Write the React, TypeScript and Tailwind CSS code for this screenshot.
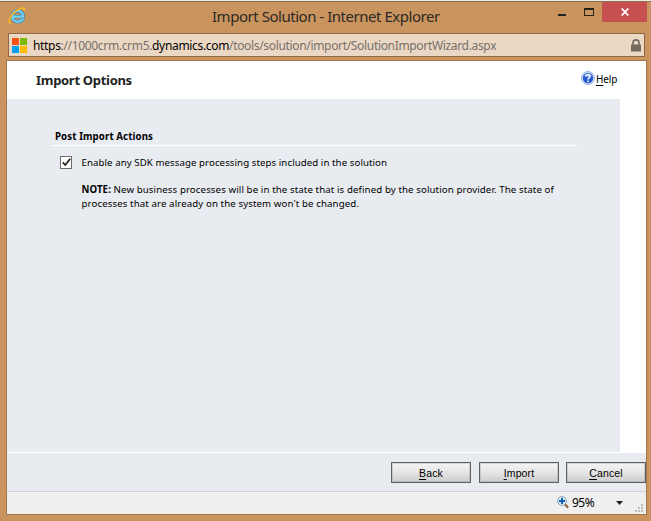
import React from "react";

function IELogo() {
  return (
    <svg className="h-[18px] w-[18px] shrink-0" viewBox="0 0 18 18" fill="none">
      <path d="M15.2 11.8C14.2 13.7 12.2 14.8 9.9 14.8C6.6 14.8 4.3 12.6 4.3 9.3C4.3 6 6.6 3.9 9.8 3.9C13.2 3.9 15.3 6.1 15.1 9.6H5.3" stroke="#2d86b5" strokeWidth="3.5" />
      <path d="M15.2 11.8C14.2 13.7 12.2 14.8 9.9 14.8C6.6 14.8 4.3 12.6 4.3 9.3C4.3 6 6.6 3.9 9.8 3.9C13.2 3.9 15.3 6.1 15.1 9.6H5.3" stroke="#78d0f2" strokeWidth="2.2" />
      <path d="M2.8 16.2C-.4 16.3 1.2 11 5.2 6.6C9.3 2 15.4 0 16.3 1.9C16.6 2.6 16.4 3.5 16.1 4.3" stroke="#f4b52b" strokeWidth="1.6" />
    </svg>
  );
}

function HelpIcon() {
  return (
    <svg className="h-[14px] w-[14px] shrink-0" viewBox="0 0 14 14">
      <circle cx="7" cy="7" r="6.4" fill="#e4edfb" stroke="#7a9ee0" strokeWidth=".9" />
      <circle cx="7" cy="7" r="5.2" fill="#245bd0" />
      <path d="M3 5Q4 2.2 7 2.2Q10 2.2 11 5Q7 7 3 5Z" fill="#6b9ceb" />
      <path d="M5 5.5C5 3.2 9 3.3 9 5.5C9 7 7 6.8 7 8.6" fill="none" stroke="white" strokeWidth="1.5" />
      <rect x="6.2" y="9.6" width="1.6" height="1.5" fill="white" />
    </svg>
  );
}

function WizardButton({ label }: { label: string }) {
  return (
    <button className="flex h-[21px] w-[80px] shrink-0 items-center justify-center border border-[#5f6063] bg-linear-to-b from-[#f5f5f5] via-[#e5e5e5] to-[#cdcdcd] font-['Liberation_Sans',Arial,sans-serif] text-[10.5px] leading-[14px] tracking-[0.15px] text-black shadow-[inset_0_0_0_1px_#77777740]">
      <span><span className="underline underline-offset-2">{label[0]}</span>{label.slice(1)}</span>
    </button>
  );
}

export default function App() {
  return (
    <div className="flex h-[521px] w-[651px] flex-col overflow-hidden border-t border-[#ecece9] bg-[#c9945e] font-['Noto_Sans',sans-serif] text-black">
      <header className="flex h-[32px] items-start border-t border-[#8e6c49]">
        <div className="w-[212px] pt-[5px] pl-[8px]"><IELogo /></div>
        <h1 className="w-[346px] pt-[4px] text-[15px] leading-[20px] tracking-[-0.47px] whitespace-nowrap text-[#2d2925]">Import Solution - Internet Explorer</h1>
        <div className="mt-[12px] h-[2px] w-[8px] bg-[#222]" />
        <div className="mt-[6px] ml-[18px] h-[8px] w-[10px] border border-t-2 border-[#27221c]" />
        <div className="ml-[8px] flex h-[20px] w-[45px] items-center justify-center bg-[#c75050]">
          <svg className="h-[8px] w-[8px]" viewBox="0 0 8 8"><path d="M.7.5L7.3 7.5M7.3.5L.7 7.5" stroke="white" strokeWidth="1.8" /></svg>
        </div>
      </header>
      <div className="ml-[8px] flex h-[24px] w-[637px] items-center border border-[#8e6744] bg-[#ebd8c4] pr-[3px] pl-[3px]">
        <div className="grid h-[15px] w-[15px] shrink-0 grid-cols-2 gap-px">
          <div className="bg-[#f65314]" /><div className="bg-[#7cbb00]" /><div className="bg-[#00a1f1]" /><div className="bg-[#ffbb00]" />
        </div>
        <div className="ml-[6px] flex-1 pt-px text-[12px] leading-[18px] tracking-[-0.33px] whitespace-nowrap text-[#77706a]">
          <span className="text-black">https</span>://1000crm.crm5.<span className="text-black">dynamics.com</span>/tools/solution/import/SolutionImportWizard.aspx
        </div>
        <svg className="h-[13px] w-[10px]" viewBox="0 0 10 13"><path d="M2 6V3.6C2-.1 8-.1 8 3.6V6" fill="none" stroke="#756b60" strokeWidth="1.6" /><rect y="5.5" width="10" height="7" rx=".6" fill="#756b60" /></svg>
      </div>
      <main className="mt-[3px] ml-[6px] flex h-[455px] w-[641px] flex-col border border-[#a0764c] bg-white">
        <div className="flex h-[38px] items-start">
          <h2 className="w-[574px] pt-[9px] pl-[29px] text-[13px] leading-[20px] font-bold tracking-[-0.3px] text-[#222]">Import Options</h2>
          <div className="flex pt-[10px]">
            <HelpIcon />
            <span className="ml-px text-[10px] leading-[17px] tracking-[-0.1px]"><span className="underline underline-offset-2">H</span>elp</span>
          </div>
        </div>
        <section className="h-[353px] w-[613px] bg-[#e8ebf0] pt-[30px] pl-[45px]">
          <h3 className="h-[17px] w-[525px] border-b border-white pl-[3px] text-[9.7px] leading-[15px] font-bold tracking-[0.1px]">Post Import Actions</h3>
          <div className="mt-[9px] flex items-center pl-[8px]">
            <div className="flex h-[13px] w-[12px] items-center justify-center border border-[#6c6c6c] bg-white">
              <svg className="h-[9px] w-[9px]" viewBox="0 0 9 9"><path d="M.8 4.4L3.3 7L8.2 .8" fill="none" stroke="#222" strokeWidth="1.8" /></svg>
            </div>
            <label className="ml-[9.5px] pt-px text-[9.7px] leading-[14px] tracking-[0.06px] whitespace-nowrap">Enable any SDK message processing steps included in the solution</label>
          </div>
          <p className="mt-[13px] ml-[29.5px] text-[9.7px] leading-[14px] tracking-[0.095px] whitespace-nowrap"><b>NOTE:</b> New business processes will be in the state that is defined by the solution provider. The state of<br />processes that are already on the system won't be changed.</p>
        </section>
        <footer className="mt-px flex h-[38px] bg-[#e8ebf0] pt-[9px] pl-[384px]">
          <WizardButton label="Back" />
          <div className="w-[8px] shrink-0" />
          <WizardButton label="Import" />
          <div className="w-[7px] shrink-0" />
          <WizardButton label="Cancel" />
        </footer>
        <div className="flex h-[23px] items-start border-t border-[#cfd1d4] bg-[#efefef] pt-[4px] pl-[550px]">
          <svg className="h-[13px] w-[12px] shrink-0" viewBox="0 0 12 13"><path d="M8 8.2L11 11.7" stroke="#93623c" strokeWidth="2.2" /><circle cx="5" cy="5" r="4.4" fill="#dcebf5" stroke="#8ba5b8" /><path d="M5 2V8M2 5H8" stroke="#1260ad" strokeWidth="2" /></svg>
          <span className="ml-[3px] w-[44px] text-[12px] leading-[14px] tracking-[-0.5px]">95%</span>
          <svg className="mt-[5px] h-[4px] w-[7px]" viewBox="0 0 7 4"><path d="M0 0H7L3.5 4Z" fill="#222" /></svg>
          <svg className="mt-[8px] ml-[12px] h-[9px] w-[9px]" viewBox="0 0 9 9" fill="#bcbcbc"><path d="M6 0h2v2h-2zM3 3h2v2h-2zM6 3h2v2h-2zM0 6h2v2h-2zM3 6h2v2h-2zM6 6h2v2h-2z" /></svg>
        </div>
      </main>
    </div>
  );
}
